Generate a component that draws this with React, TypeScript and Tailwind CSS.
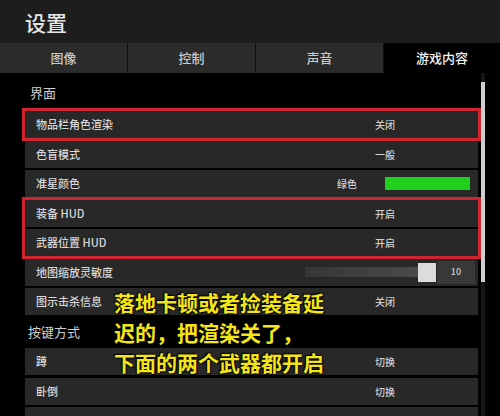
import React from "react";

const tabs = ["图像", "控制", "声音", "游戏内容"];

const Row = ({ label, value }: { label: string; value?: string }) => {
  return (
    <div className="h-[27px] bg-[#282828] flex items-center text-[11px] font-medium text-[#d8d8d8]">
      <div className="w-[300px] pl-[11px]">{label}</div>
      <div className="w-[120px] text-center text-[10px] text-[#cfcfcf]">{value}</div>
    </div>
  );
};

const App = () => {
  return (
    <div className="relative w-[500px] h-[416px] overflow-hidden bg-black font-['Noto_Sans_CJK_SC','Noto_Sans',sans-serif]">
      {/* Title */}
      <div className="h-[43px] bg-[#1d1d1d] flex items-center pl-[25px] pt-[2px] text-[21px] font-medium text-[#e6e6e6]">设置</div>

      {/* Tabs */}
      <div className="flex h-[30px] gap-px bg-[#101010]">
        {tabs.map((t, i) => (
          <div
            key={t}
            className={
              i === 3
                ? "flex-1 bg-black flex items-center justify-center text-[13px] font-medium text-[#f0f0f0]"
                : "w-[127px] bg-[#2b2b2b] flex items-center justify-center text-[13px] font-medium text-[#c8c8c8]"
            }
          >
            {t}
          </div>
        ))}
      </div>

      <div className="flex">
        {/* Settings list */}
        <div className="ml-[25px] w-[453px] flex flex-col">
          <div className="h-[38px] flex items-center pt-[2px] pl-[5px] text-[13px] text-[#cfcfcf]">界面</div>
          <div className="flex flex-col gap-[2.5px]">
            <div className="outline-3 outline-solid outline-[#d0242e] shadow-[0_0_4px_#ff3a3a]">
              <Row label="物品栏角色渲染" value="关闭" />
            </div>
            <Row label="色盲模式" value="一般" />
            <div className="h-[27px] bg-[#282828] flex items-center text-[11px] font-medium text-[#d8d8d8]">
              <div className="w-[300px] pl-[11px]">准星颜色</div>
              <div className="w-[44px] text-center text-[10px] text-[#cfcfcf]">绿色</div>
              <div className="ml-[16px] w-[85px] h-[13px] bg-[#1fd11f]"></div>
            </div>
            <div className="flex flex-col gap-[2.5px] outline-3 outline-solid outline-[#d0242e] shadow-[0_0_4px_#ff3a3a]">
              <Row label="装备 HUD" value="开启" />
              <Row label="武器位置 HUD" value="开启" />
            </div>
            <div className="h-[27px] bg-[#282828] flex items-center text-[11px] font-medium text-[#d8d8d8]">
              <div className="w-[280px] pl-[11px]">地图缩放灵敏度</div>
              <div className="w-[113px] h-[10px] bg-gradient-to-r from-[#363636] to-[#4a4a4a]"></div>
              <div className="w-[18px] h-[19px] bg-[#dcdcdc]"></div>
              <div className="ml-px w-[38px] h-[23px] bg-[#383838] flex items-center justify-center text-[9px] text-[#cfcfcf]">10</div>
            </div>
            <Row label="图示击杀信息" value="关闭" />
          </div>
          <div className="h-[33px] flex items-center pl-[3px] text-[13px] text-[#cfcfcf]">按键方式</div>
          <div className="flex flex-col gap-[2.5px]">
            <Row label="蹲" value="切换" />
            <Row label="卧倒" value="切换" />
            <Row label="" value="" />
          </div>
        </div>

        {/* Scrollbar */}
        <div className="ml-[3px] w-[4px] h-[343px] bg-[#161616]">
          <div className="mt-[9px] h-[200px] bg-[#cfcfcf]"></div>
        </div>
      </div>

      {/* Yellow caption overlay */}
      <div className="absolute left-[114px] top-[287px] text-[21px] leading-[30px] font-bold text-[#f3e518] [text-shadow:0_0_2px_#000,1px_1px_1px_#000,-1px_-1px_1px_#000]">
        <div>落地卡顿或者捡装备延</div>
        <div>迟的，把渲染关了，</div>
        <div>下面的两个武器都开启</div>
      </div>
    </div>
  );
};

export default App;
